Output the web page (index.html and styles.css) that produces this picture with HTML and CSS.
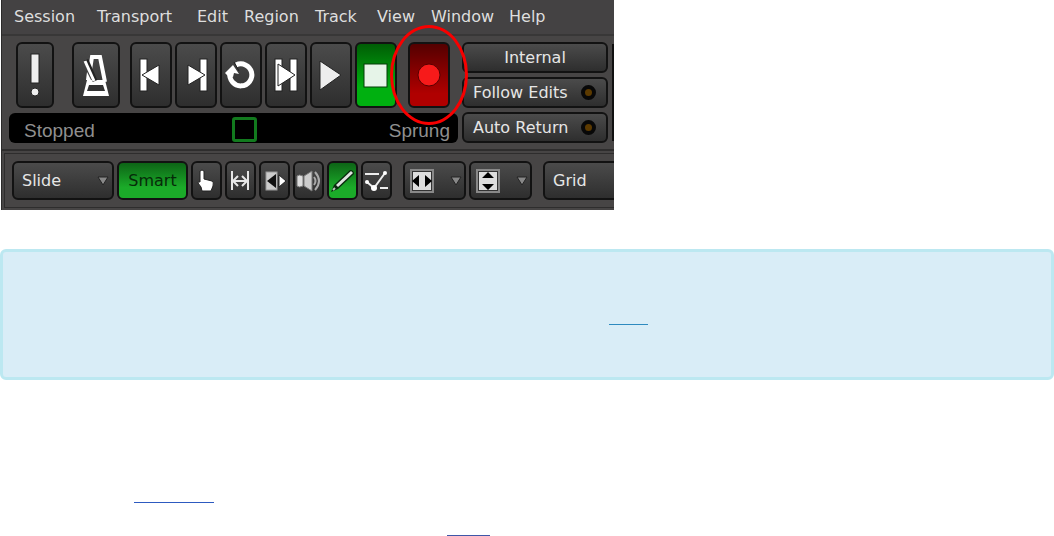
FILE: index.html
```
<!DOCTYPE html>
<html lang="en">
<head>
    <meta charset="UTF-8">
    <title>Recording</title>
    <link rel="stylesheet" href="styles.css">
</head>
<body>
    <div class="editor">
        <nav class="menu">
            <a href="#">Session</a>
            <a href="#">Transport</a>
            <a href="#">Edit</a>
            <a href="#">Region</a>
            <a href="#">Track</a>
            <a href="#">View</a>
            <a href="#">Window</a>
            <a href="#">Help</a>
        </nav>
        <div class="transport">
            <div class="controls">
                <div class="buttons">
                    <button class="btn panic" aria-label="Panic">
                        <svg width="38" height="66" viewBox="0 0 38 66"><g fill="#eee" stroke="#222"><rect x="15" y="12" width="8" height="29"/><circle cx="19" cy="50" r="4"/></g></svg>
                    </button>
                    <button class="btn metronome" aria-label="Metronome">
                        <svg width="48" height="66" viewBox="0 0 48 66"><path d="M18 28L20 15H28L33 40" fill="none" stroke="#fff" stroke-width="4"/><path d="M15 30L19 38H14Z" fill="#fff"/><path d="M11 54L15 38H33L37 54Z" fill="#fff"/><path d="M17 43H31L33 49H15Z" fill="#333"/><path d="M14 18L23 39" stroke="#222" stroke-width="5"/><path d="M13 19L22 39" stroke="#fff" stroke-width="3"/></svg>
                    </button>
                    <div class="group">
                        <button class="btn" aria-label="Go to start">
                            <svg width="42" height="66" viewBox="0 0 42 66"><g fill="#fff" stroke="#222"><rect x="10" y="17" width="7" height="32"/><path d="M12 33L29 23V43Z"/></g></svg>
                        </button>
                        <button class="btn" aria-label="Go to end">
                            <svg width="42" height="66" viewBox="0 0 42 66"><g fill="#fff" stroke="#222"><rect x="25" y="17" width="7" height="32"/><path d="M30 33L13 23V43Z"/></g></svg>
                        </button>
                        <button class="btn" aria-label="Loop">
                            <svg width="42" height="66" viewBox="0 0 42 66"><path d="M16 23A11 11 0 1 1 10 31" fill="none" stroke="#fff" stroke-width="5"/><path d="M5 31L13 23L19 32L14 31L13 35L8 34Z" fill="#fff"/><path d="M14 20L19 29" stroke="#222" stroke-width="1"/></svg>
                        </button>
                        <button class="btn" aria-label="Play range">
                            <svg width="42" height="66" viewBox="0 0 42 66"><g fill="#fff" stroke="#222"><rect x="10" y="17" width="7" height="32"/><rect x="25" y="17" width="7" height="32"/><path d="M30 33L13 22V44Z"/></g></svg>
                        </button>
                        <button class="btn" aria-label="Play">
                            <svg width="42" height="66" viewBox="0 0 42 66"><path d="M10 19V48L31 33Z" fill="#eee" stroke="#222"/></svg>
                        </button>
                        <button class="btn stop" aria-label="Stop">
                            <svg width="42" height="66" viewBox="0 0 42 66"><rect x="9" y="22" width="23" height="23" fill="#e6f4e8" stroke="#033d06"/></svg>
                        </button>
                    </div>
                    <div class="record-wrap">
                        <button class="btn record" aria-label="Record">
                            <svg width="42" height="66" viewBox="0 0 42 66"><circle cx="21" cy="33" r="11" fill="#f71a1a" stroke="#500"/></svg>
                        </button>
                        <span class="ring"></span>
                    </div>
                </div>
                <div class="shuttle">
                    <span>Stopped</span>
                    <i class="marker"></i>
                    <span>Sprung</span>
                </div>
            </div>
            <div class="options">
                <button class="btn">Internal</button>
                <button class="btn follow">Follow Edits<i class="led"></i></button>
                <button class="btn follow">Auto Return<i class="led"></i></button>
            </div>
            <div class="clock"></div>
        </div>
        <div class="toolbar">
            <div class="tools">
                <div class="drop slide">
                    <select class="btn" aria-label="Edit mode"><option>Slide</option></select>
                    <svg class="caret" width="12" height="10" viewBox="0 0 12 10"><path d="M1 1H11L6 9Z" fill="#888" stroke="#222"/></svg>
                </div>
                <button class="btn smart">Smart</button>
                <button class="btn tool" aria-label="Grab">
                    <svg width="31" height="39" viewBox="0 0 31 39"><path d="M9 10Q11 8 13 10V18L21 20Q23 21 22 25L20 30H11L10 26L7 22Q7 20 9 21Z" fill="#fff" stroke="#222"/></svg>
                </button>
                <button class="btn tool" aria-label="Range">
                    <svg width="31" height="39" viewBox="0 0 31 39"><path d="M7 10V29M23 10V29M8 20H22M13 15L8 20L13 25M17 15L22 20L17 25" fill="none" stroke="#e6e6e6" stroke-width="2"/></svg>
                </button>
                <button class="btn tool" aria-label="Cut">
                    <svg width="31" height="39" viewBox="0 0 31 39"><rect x="7" y="11" width="11" height="18" fill="#ccc" stroke="#999"/><path d="M8 20L17 13V27Z" fill="#111"/><path d="M20 14L27 20L20 26Z" fill="#fff" stroke="#222"/></svg>
                </button>
                <button class="btn tool" aria-label="Audition">
                    <svg width="31" height="39" viewBox="0 0 31 39"><path d="M4 15Q6 13 10 15V25Q6 27 4 25Z" fill="#ddd" stroke="#777"/><path d="M11 15L19 10V30L11 25Z" fill="#ccc" stroke="#777"/><path d="M21 16Q24 20 21 24M22 11Q30 20 22 29" fill="none" stroke="#aaa" stroke-width="2"/></svg>
                </button>
                <button class="btn tool on" aria-label="Draw">
                    <svg width="31" height="39" viewBox="0 0 31 39"><path d="M4 31L7 24L23 9Q27 9 27 13L11 28Z" fill="#0a2c0e"/><path d="M10 25L25 11" stroke="#e0e4e0" stroke-width="3"/><path d="M6 29L8 27" stroke="#b9c9bb" stroke-width="2"/></svg>
                </button>
                <button class="btn tool" aria-label="Edit points">
                    <svg width="31" height="39" viewBox="0 0 31 39"><g stroke="#eee" stroke-width="2" fill="none"><path d="M4 13H18M6 21L13 27L24 12M19 27H27"/></g><g fill="#fff"><circle cx="24" cy="12" r="2"/><circle cx="6" cy="21" r="2"/><circle cx="13" cy="27" r="3"/></g></svg>
                </button>
            </div>
            <div class="tools">
                <button class="btn zoom" aria-label="Track width" aria-haspopup="true">
                    <svg width="24" height="24" viewBox="0 0 24 24"><rect x="1" y="1" width="22" height="22" fill="#333" stroke="#888" stroke-width="2"/><path d="M3 3H21V21H3Z" fill="#ddd"/><path d="M2 12L9 6V18ZM22 12L15 6V18Z" fill="#000"/></svg>
                    <svg width="12" height="10" viewBox="0 0 12 10"><path d="M1 1H11L6 9Z" fill="#888" stroke="#222"/></svg>
                </button>
                <button class="btn zoom" aria-label="Track height" aria-haspopup="true">
                    <svg width="24" height="24" viewBox="0 0 24 24"><rect x="1" y="1" width="22" height="22" fill="#333" stroke="#888" stroke-width="2"/><path d="M3 3H21V21H3Z" fill="#ddd"/><path d="M12 3L18 9H6ZM12 21L18 15H6Z" fill="#000"/></svg>
                    <svg width="12" height="10" viewBox="0 0 12 10"><path d="M1 1H11L6 9Z" fill="#888" stroke="#222"/></svg>
                </button>
            </div>
            <div class="drop grid">
                <select class="btn" aria-label="Snap mode"><option>Grid</option></select>
            </div>
        </div>
    </div>
    <div class="note">
        <a class="blank" href="#" aria-label="Read more"></a>
    </div>
    <p class="line first"><a class="blank" href="#" aria-label="Previous section"></a></p>
    <p class="line second"><a class="blank" href="#" aria-label="Next section"></a></p>
</body>
</html>
```
FILE: styles.css
```
*{
    box-sizing: border-box;
    padding: 0;
    margin: 0;
}
body{
    background: #fff;
    overflow: hidden;
}
a{
    text-decoration: none;
}
svg{
    display: block;
    flex: none;
}
.editor{
    max-width: 613px;
    margin-left: 1px;
    padding-bottom: 2px;
    overflow: hidden;
    background: #474545;
    border-left: 1px solid #2b2a2a;
    font: 16px/20px "DejaVu Sans", sans-serif;
    color: #e6e6e6;
}
.menu{
    display: grid;
    grid-template-columns: 83px 100px 47px 71px 62px 54px 78px auto;
    padding: 7px 0 7px 12px;
    background: #444243;
    border-bottom: 2px solid #383737;
}
.menu a{
    color: #dedede;
}
.btn{
    display: flex;
    align-items: center;
    justify-content: center;
    height: 66px;
    border: 2px solid #121212;
    border-radius: 6px;
    background: linear-gradient(#4b4b4b, #2e2e2e);
    color: #e6e6e6;
    font: inherit;
}
.transport{
    display: flex;
    padding: 6px 0 6px 7px;
    border-bottom: 2px solid #2e2d2d;
}
.controls{
    flex: none;
    width: 449px;
}
.buttons{
    display: flex;
    padding-left: 7px;
    margin-bottom: 5px;
}
.group{
    display: flex;
    gap: 3px;
    margin: 0 11px 0 10px;
}
.group .btn, .record{
    width: 42px;
}
.panic{
    width: 38px;
    margin-right: 18px;
}
.metronome{
    width: 48px;
}
.group .stop{
    background: linear-gradient(#005d05, #00b010 70%);
}
.record-wrap{
    position: relative;
}
.record{
    background: linear-gradient(#540000, #b00000 80%);
}
.ring{
    position: absolute;
    z-index: 1;
    inset: -17px -18px;
    border: 3px solid #f80000;
    border-radius: 50%;
    pointer-events: none;
}
.shuttle{
    display: grid;
    grid-template-columns: 1fr auto 1fr;
    align-items: center;
    height: 30px;
    padding: 0 8px 0 15px;
    border-radius: 6px;
    background: #000;
    color: #8f8f8f;
    font: 19px/30px "Liberation Sans", sans-serif;
}
.shuttle span{
    padding-top: 3px;
}
.shuttle span:last-child{
    text-align: right;
}
.marker{
    width: 25px;
    height: 25px;
    margin-left: 14px;
    border: 3px solid #127a1e;
    border-radius: 3px;
}
.options{
    display: grid;
    gap: 4px;
    flex: none;
    width: 146px;
    margin: 0 4px;
}
.options .btn{
    height: 31px;
}
.options .follow{
    justify-content: space-between;
    padding: 0 10px 0 9px;
}
.led{
    width: 15px;
    height: 15px;
    border: 4px solid #080808;
    border-radius: 50%;
    background: #5c3a00;
}
.clock{
    flex: 1;
    margin: 2px 0;
    background: #111;
}
.toolbar{
    display: flex;
    gap: 11px;
    margin: 2px 0 0 2px;
    padding: 7px 0 7px 7px;
    border: 1px solid #2e2d2d;
    border-right: 0;
}
.tools{
    display: flex;
    flex: none;
    gap: 3px;
}
.toolbar .btn{
    flex: none;
    height: 39px;
}
.drop{
    position: relative;
    flex: none;
}
.drop select{
    width: 100%;
    padding-left: 8px;
    appearance: none;
}
.caret{
    position: absolute;
    right: 5px;
    top: 15px;
}
.slide{
    width: 102px;
}
.grid{
    width: 110px;
}
.smart{
    width: 71px;
}
.toolbar .smart, .toolbar .on{
    background: linear-gradient(#0d6416, #1bab29 70%);
}
.toolbar .smart{
    color: #062b09;
}
.tool{
    width: 31px;
}
.toolbar .zoom{
    width: 63px;
    justify-content: space-between;
    padding: 0 2px 0 5px;
}
.note{
    height: 131px;
    margin-top: 39px;
    padding: 54px 0 0 606px;
    border: 3px solid #bce8f1;
    border-radius: 6px;
    background: #d9edf7;
}
.blank{
    display: block;
    height: 19px;
    border-bottom: 1px solid #2d5ac0;
}
.note .blank{
    width: 39px;
    border-color: #2d8abf;
}
.first{
    margin-top: 104px;
    padding-left: 134px;
}
.first .blank{
    width: 80px;
}
.second{
    margin-top: 14px;
    padding-left: 447px;
}
.second .blank{
    width: 43px;
    border-color: #3f57a8;
}
```
